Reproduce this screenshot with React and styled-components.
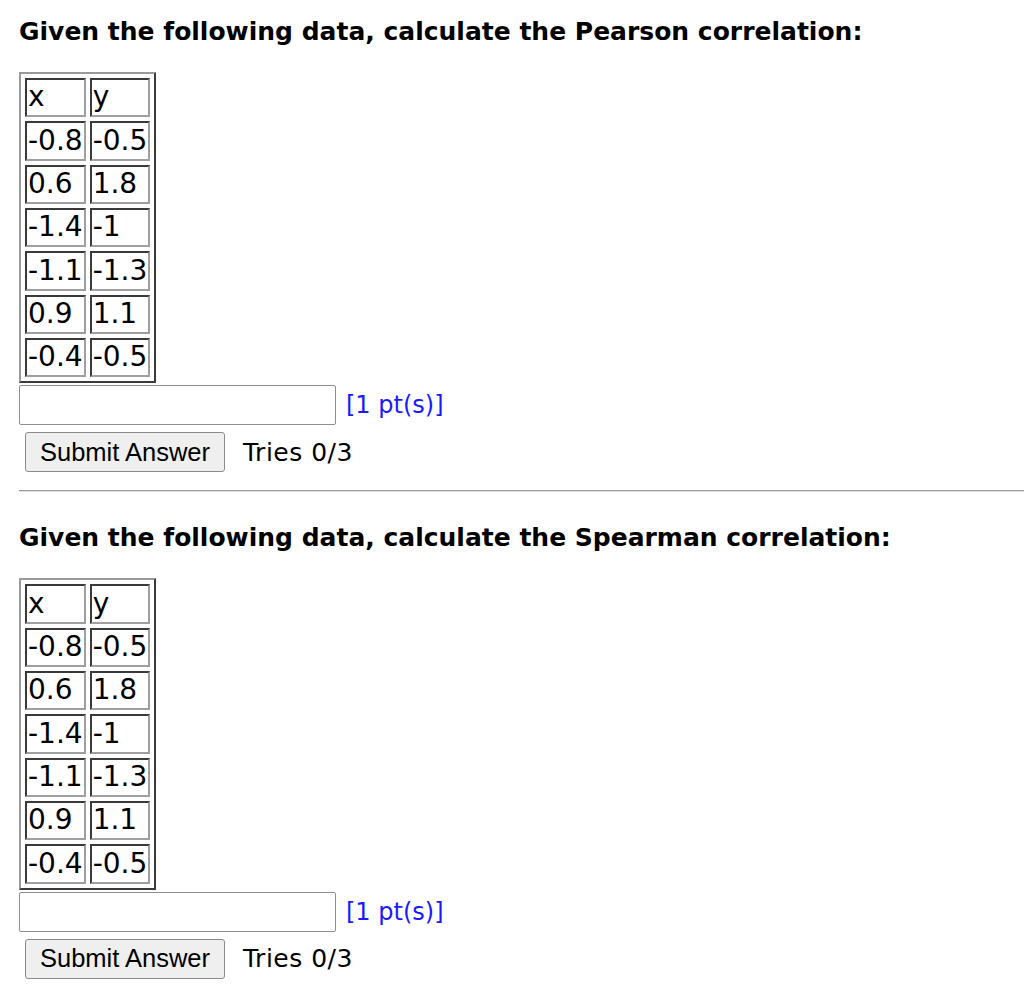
import React from "react";
import styled, { createGlobalStyle } from "styled-components";

const GlobalStyle = createGlobalStyle`
  html, body {
    margin: 0;
    padding: 0;
    background: #ffffff;
  }
  body {
    font-family: "DejaVu Sans", Verdana, sans-serif;
    color: #000;
    overflow: hidden;
  }
`;

const Page = styled.div`
  padding: 17px 0 0 19px;
`;

const Question = styled.section`
  display: flex;
  flex-direction: column;
  align-items: flex-start;
`;

const Prompt = styled.h2`
  margin: 0;
  font-family: "DejaVu Sans", Verdana, sans-serif;
  font-weight: bold;
  font-size: 25px;
  line-height: 29px;
  color: #000;
`;

const DataTable = styled.table`
  margin-top: 26px;
  border-collapse: separate;
  border-spacing: 4px 4px;
  border-width: 2px;
  border-style: solid;
  border-color: #9a9a9a #3a3a3a #3a3a3a #9a9a9a;
`;

const Cell = styled.td`
  font-family: "DejaVu Sans", Verdana, sans-serif;
  font-size: 28px;
  line-height: 33px;
  padding: 0.35px 1px 2px 1px;
  border-width: 2px;
  border-style: solid;
  border-color: #3a3a3a #a0a0a0 #a0a0a0 #3a3a3a;
  white-space: nowrap;
  text-align: left;
  vertical-align: top;
`;

const AnswerRow = styled.div`
  margin-top: 2px;
  display: flex;
  align-items: center;
  gap: 10px;
`;

const AnswerInput = styled.input`
  box-sizing: border-box;
  width: 317px;
  height: 40px;
  margin: 0;
  border: 1px solid #8f8f8f;
  border-radius: 2px;
  background: #fff;
  font-size: 24px;
  padding: 0 4px;
`;

const Points = styled.span`
  font-family: "DejaVu Sans", Verdana, sans-serif;
  font-size: 24px;
  color: #1a1aff;
`;

const SubmitRow = styled.div`
  margin-top: 7px;
  margin-left: 6px;
  display: flex;
  align-items: center;
  gap: 18px;
`;

const SubmitButton = styled.button`
  box-sizing: border-box;
  width: 200px;
  height: 40px;
  margin: 0;
  padding: 0;
  background: #efefef;
  border: 1px solid #8a8a8a;
  border-radius: 3px;
  font-family: "Liberation Sans", Arial, sans-serif;
  font-size: 25.5px;
  color: #000;
  cursor: pointer;
`;

const Tries = styled.span`
  font-family: "DejaVu Sans", Verdana, sans-serif;
  font-size: 25px;
  letter-spacing: 0.5px;
  color: #000;
`;

const Divider = styled.hr`
  margin: 18px 0 31px 0;
  height: 0;
  border: 0;
  border-top: 1px solid #9a9a9a;
  border-bottom: 1px solid #e2e2e2;
`;

const rows = [
  ["x", "y"],
  ["-0.8", "-0.5"],
  ["0.6", "1.8"],
  ["-1.4", "-1"],
  ["-1.1", "-1.3"],
  ["0.9", "1.1"],
  ["-0.4", "-0.5"],
];

function QuestionBlock({ kind }) {
  return (
    <Question>
      <Prompt>Given the following data, calculate the {kind} correlation:</Prompt>
      <DataTable>
        <tbody>
          {rows.map((r, i) => (
            <tr key={i}>
              <Cell>{r[0]}</Cell>
              <Cell>{r[1]}</Cell>
            </tr>
          ))}
        </tbody>
      </DataTable>
      <AnswerRow>
        <AnswerInput type="text" />
        <Points>[1 pt(s)]</Points>
      </AnswerRow>
      <SubmitRow>
        <SubmitButton type="button">Submit Answer</SubmitButton>
        <Tries>Tries 0/3</Tries>
      </SubmitRow>
    </Question>
  );
}

export default function App() {
  return (
    <>
      <GlobalStyle />
      <Page>
        <QuestionBlock kind="Pearson" />
        <Divider />
        <QuestionBlock kind="Spearman" />
      </Page>
    </>
  );
}
